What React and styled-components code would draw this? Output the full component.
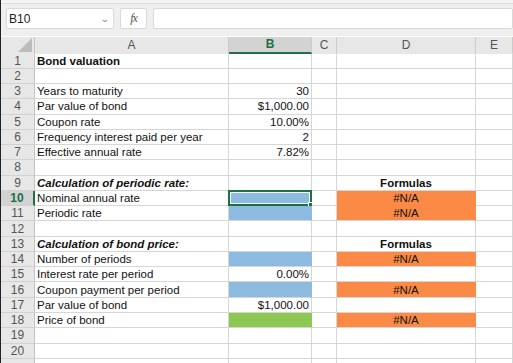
import React from "react";
import styled, { createGlobalStyle } from "styled-components";

const GRID = "#d6d6d6";
const GREEN = "#1e7145";
const FILLS = { blue: "#8dbadf", orange: "#fb8a46", green: "#8cc852" };

const Global = createGlobalStyle`
  html, body { margin: 0; padding: 0; background: #fff; overflow: hidden; }
  body { font-family: "Liberation Sans", Arial, sans-serif; }
`;

const Window = styled.div`
  width: 513px;
  height: 363px;
  border-left: 1px solid #222;
  box-sizing: border-box;
  overflow: hidden;
  background: #fff;
`;

const Toolbar = styled.div`
  height: 36px;
  box-sizing: border-box;
  background: #efefef;
  border-top: 3px solid #f4f4f4;
  box-shadow: inset 0 1px 0 #dcdcdc;
  padding: 5px 0 0 5px;
  display: flex;
  gap: 6px;
`;

const Box = styled.div`
  height: 21px;
  box-sizing: border-box;
  background: #fff;
  border: 1px solid #d9d9d9;
  border-radius: 2px;
  display: flex;
  align-items: center;
  width: ${(p) => p.$w || "auto"};
  flex: ${(p) => (p.$grow ? 1 : "none")};
  justify-content: ${(p) => (p.$center ? "center" : "flex-start")};
`;

const NameText = styled.span`
  font-size: 12px;
  color: #222;
  padding-left: 2px;
  flex: 1;
`;

const Caret = styled.span`
  font-size: 9px;
  color: #888;
  padding-right: 3px;
  transform: scaleX(1.3);
`;

const Fx = styled.span`
  font-family: "Liberation Serif", serif;
  font-style: italic;
  font-size: 12px;
  color: #555;
  letter-spacing: -1px;
`;

const Sheet = styled.div`
  display: grid;
  grid-template-columns: 34px 194px 83px 25px 139px 1fr;
  grid-auto-rows: 15.28px;
  grid-template-rows: 17px;
  margin-top: 0.5px;
`;

const ColHead = styled.div`
  background: ${(p) => (p.$active ? "#d3d3d3" : "#e7e7e7")};
  border-right: 1px solid #cbcbcb;
  border-bottom: ${(p) => (p.$active ? `2px solid ${GREEN}` : "1px solid #e7e7e7")};
  box-sizing: border-box;
  display: flex;
  align-items: center;
  justify-content: center;
  font-size: 12px;
  color: ${(p) => (p.$active ? GREEN : "#555")};
  font-weight: ${(p) => (p.$active ? 700 : 400)};
  position: relative;
`;

const Corner = styled(ColHead)`
  border-right: 1px solid #c4c4c4;
  &::after {
    content: "";
    position: absolute;
    right: 2px;
    bottom: 1px;
    border-style: solid;
    border-width: 0 0 14px 14px;
    border-color: transparent transparent #bcbcbc transparent;
  }
`;

const RowHead = styled.div`
  background: ${(p) => (p.$active ? "#d3d3d3" : "#e7e7e7")};
  border-bottom: 1px solid #d2d2d2;
  border-right: ${(p) => (p.$active ? `2px solid ${GREEN}` : "1px solid #c4c4c4")};
  box-sizing: border-box;
  display: flex;
  align-items: center;
  justify-content: center;
  font-size: 12px;
  color: ${(p) => (p.$active ? GREEN : "#555")};
  font-weight: ${(p) => (p.$active ? 700 : 400)};
`;

const Cell = styled.div`
  box-sizing: border-box;
  background: ${(p) => (p.$fill ? FILLS[p.$fill] : "#fff")};
  border-right: 1px solid ${(p) => (p.$fill ? FILLS[p.$fill] : GRID)};
  border-bottom: 1px solid ${(p) => p.$bottom || GRID};
  display: flex;
  align-items: center;
  justify-content: ${(p) => p.$align || "flex-start"};
  padding: 0 2px;
  font-size: 11.5px;
  color: #111;
  white-space: nowrap;
  font-weight: ${(p) => (p.$bold ? 700 : 400)};
  font-style: ${(p) => (p.$italic ? "italic" : "normal")};
  position: relative;
`;

const Selection = styled.div`
  position: absolute;
  left: -1px;
  top: -1px;
  right: -1px;
  bottom: -1px;
  border: 2px solid ${GREEN};
  box-shadow: inset 0 0 0 1px #fff;
  &::after {
    content: "";
    position: absolute;
    right: -4px;
    bottom: -4px;
    width: 4px;
    height: 4px;
    background: ${GREEN};
    border: 1px solid #fff;
  }
`;

const rows = [
  { a: "Bond valuation", bold: true },
  {},
  { a: "Years to maturity", b: "30" },
  { a: "Par value of bond", b: "$1,000.00" },
  { a: "Coupon rate", b: "10.00%" },
  { a: "Frequency interest paid per year", b: "2" },
  { a: "Effective annual rate", b: "7.82%" },
  {},
  { a: "Calculation of periodic rate:", bold: true, italic: true, d: "Formulas", dHead: true },
  { a: "Nominal annual rate", bFill: "blue", d: "#N/A", dFill: "orange", active: true },
  { a: "Periodic rate", bFill: "blue", d: "#N/A", dFill: "orange" },
  {},
  { a: "Calculation of bond price:", bold: true, italic: true, d: "Formulas", dHead: true },
  { a: "Number of periods", bFill: "blue", d: "#N/A", dFill: "orange" },
  { a: "Interest rate per period", b: "0.00%" },
  { a: "Coupon payment per period", bFill: "blue", d: "#N/A", dFill: "orange" },
  { a: "Par value of bond", b: "$1,000.00" },
  { a: "Price of bond", bFill: "green", d: "#N/A", dFill: "orange" },
  {},
  {},
  { partial: true },
];

const bottomOf = (fill, next) => (fill && next && fill === next ? FILLS[fill] : GRID);

export default function App() {
  return (
    <Window>
      <Global />
      <Toolbar>
        <Box $w="108px">
          <NameText>B10</NameText>
          <Caret>⌄</Caret>
        </Box>
        <Box $w="27px" $center>
          <Fx>fx</Fx>
        </Box>
        <Box $grow />
      </Toolbar>
      <Sheet>
        <Corner />
        <ColHead>A</ColHead>
        <ColHead $active>B</ColHead>
        <ColHead>C</ColHead>
        <ColHead>D</ColHead>
        <ColHead>E</ColHead>
        {rows.map((r, i) => {
          const next = rows[i + 1] || {};
          return (
            <React.Fragment key={i}>
              <RowHead $active={r.active}>{r.partial ? null : i + 1}</RowHead>
              <Cell $bold={r.bold} $italic={r.italic}>{r.a}</Cell>
              <Cell $align="flex-end" $fill={r.bFill} $bottom={bottomOf(r.bFill, next.bFill)}>
                {r.b}
                {r.active && <Selection />}
              </Cell>
              <Cell />
              <Cell
                $align="center"
                $bold={r.dHead}
                $fill={r.dFill}
                $bottom={bottomOf(r.dFill, next.dFill)}
              >
                {r.d}
              </Cell>
              <Cell />
            </React.Fragment>
          );
        })}
      </Sheet>
    </Window>
  );
}
